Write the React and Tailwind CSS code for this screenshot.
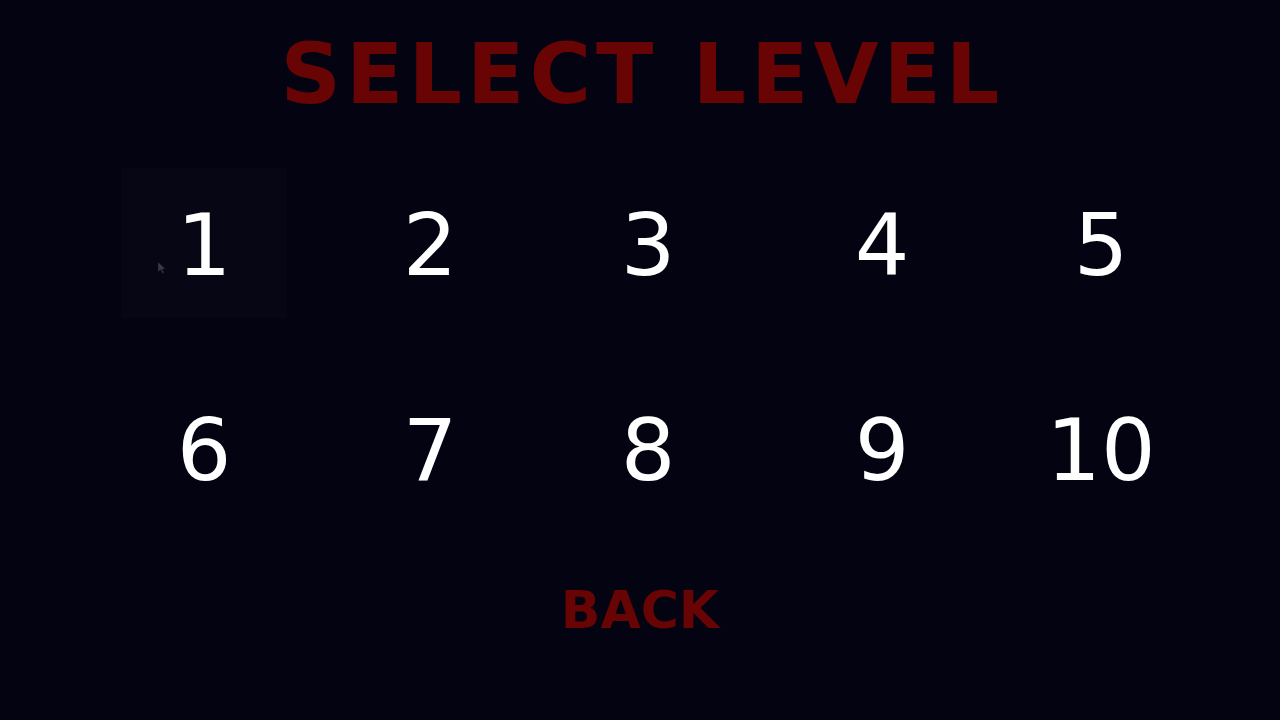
import React from "react";

const levels = [1, 2, 3, 4, 5, 6, 7, 8, 9, 10];
const hovered = 1;

function Cursor() {
    return (
        <svg className="absolute left-[36px] top-[93px]" width="9" height="13" viewBox="0 0 9 13">
            <path d="M1 1 L1 11 L3.5 8.5 L5.5 12.5 L7 11.8 L5 8 L8.5 8 Z" fill="#3a3a48" stroke="#15141f" strokeWidth="0.6" />
        </svg>
    );
}

function LevelButton({ n }) {
    const active = n === hovered;
    return (
        <button
            className={`relative flex h-[150px] w-[166px] items-center justify-center pt-[3px] text-[86px] leading-none text-white ${
                active ? "bg-[#070615]" : ""
            }`}
        >
            {n}
            {active && <Cursor />}
        </button>
    );
}

export default function App() {
    return (
        <div className="flex h-[720px] w-full flex-col items-center bg-[#040312] font-['DejaVu_Sans',sans-serif]">
            <h1 className="mt-[32px] pl-[5px] text-[84px] font-bold leading-none tracking-[5px] text-[#680404]">
                SELECT LEVEL
            </h1>

            <div className="mt-[52px] grid w-full grid-cols-[226px_218px_234px_219px_166px] gap-y-[55px] pl-[121px]">
                {levels.map((n) => (
                    <LevelButton key={n} n={n} />
                ))}
            </div>

            <button className="mt-[61px] text-[52px] font-bold leading-none text-[#680404]">BACK</button>
        </div>
    );
}
